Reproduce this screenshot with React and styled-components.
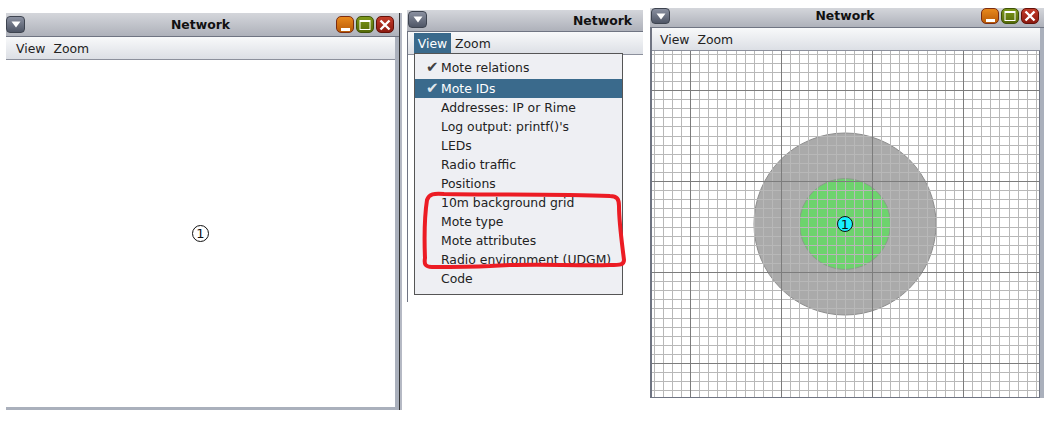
import React from "react";
import styled, { createGlobalStyle } from "styled-components";

const GlobalStyle = createGlobalStyle`
  html, body {
    margin: 0;
    padding: 0;
    background: #fff;
  }
  body {
    font-family: "DejaVu Sans", sans-serif;
    color: #222;
  }
`;

const MENU_ITEMS = [
  { label: "Mote relations", checked: true },
  { label: "Mote IDs", checked: true, active: true },
  { label: "Addresses: IP or Rime" },
  { label: "Log output: printf()'s" },
  { label: "LEDs" },
  { label: "Radio traffic" },
  { label: "Positions" },
  { label: "10m background grid" },
  { label: "Mote type" },
  { label: "Mote attributes" },
  { label: "Radio environment (UDGM)" },
  { label: "Code" },
];

const MenuIcon = () => (
  <svg width="10" height="7" viewBox="0 0 10 7">
    <path d="M0.5 0.5H9.5L5 6.5Z" fill="#fff" />
  </svg>
);

const MinIcon = () => (
  <svg width="11" height="12" viewBox="0 0 11 12">
    <rect x="1" y="9" width="9" height="3" fill="#fff" />
  </svg>
);

const MaxIcon = () => (
  <svg width="12" height="12" viewBox="0 0 12 12">
    <rect x="1" y="1.5" width="10" height="9" fill="none" stroke="#fff" strokeWidth="1" />
    <rect x="1" y="1" width="10" height="2" fill="#fff" />
  </svg>
);

const CloseIcon = () => (
  <svg width="12" height="12" viewBox="0 0 12 12">
    <path d="M1.5 1.5L10.5 10.5M10.5 1.5L1.5 10.5" stroke="#fff" strokeWidth="2.4" />
  </svg>
);

const Window = ({ top, left, width, height, titleHeight, sysLeft, sysTop, titleEnd, buttons, compact, edgeLeft, edgeRight, edgeBottom, children }) => (
  <Frame $top={top} $left={left} $width={width} $height={height} $edgeLeft={edgeLeft} $edgeRight={edgeRight} $edgeBottom={edgeBottom}>
    <TitleBar $height={titleHeight} $edgeLeft={edgeLeft} $edgeRight={edgeRight} $end={titleEnd} $compact={compact}>
      <SystemButton $left={sysLeft} $top={sysTop} $compact={compact}>
        <MenuIcon />
      </SystemButton>
      <Title>Network</Title>
      {buttons && (
        <TitleButtons $top={sysTop}>
          <TitleButton $compact={compact} $from="#e8881c" $to="#b85a08" $edge="#7c2c10">
            <MinIcon />
          </TitleButton>
          <TitleButton $compact={compact} $from="#7c981a" $to="#566a08" $edge="#3f5208">
            <MaxIcon />
          </TitleButton>
          <TitleButton $compact={compact} $from="#c43c2a" $to="#8c1a10" $edge="#641008">
            <CloseIcon />
          </TitleButton>
        </TitleButtons>
      )}
    </TitleBar>
    {children}
  </Frame>
);

const MenuBar = ({ open, pad }) => (
  <Bar $pad={pad}>
    <BarItem $open={open}>View</BarItem>
    <BarItem>Zoom</BarItem>
  </Bar>
);

// the simulator canvas: everything here is drawn, the grid lies over the radio circles
const GridCanvas = () => {
  const w = 387;
  const h = 346;
  const step = 9.1;
  const ox = 38;
  const oy = 39;
  const minorX = [];
  const minorY = [];
  const majorX = [];
  const majorY = [];
  for (let i = -4; ox + i * step < w; i++) {
    const x = Math.round(ox + i * step) + 0.5;
    (((i % 10) + 10) % 10 === 0 ? majorX : minorX).push(x);
  }
  for (let i = -4; oy + i * step < h; i++) {
    const y = Math.round(oy + i * step) + 0.5;
    (((i % 10) + 10) % 10 === 0 ? majorY : minorY).push(y);
  }
  return (
    <svg width={w} height={h} viewBox={`0 0 ${w} ${h}`} style={{ display: "block" }}>
      <circle cx="193" cy="173" r="91" fill="#aaaaaa" stroke="#8c8c8c" />
      <circle cx="193" cy="173" r="45.5" fill="#6dd36d" stroke="#8c9c8c" />
      <g stroke="#b8b8b8">
        {minorX.map((x) => (
          <line key={x} x1={x} x2={x} y1="0" y2={h} />
        ))}
        {minorY.map((y) => (
          <line key={y} x1="0" x2={w} y1={y} y2={y} />
        ))}
      </g>
      <g stroke="#7c7c7c">
        {majorX.map((x) => (
          <line key={x} x1={x} x2={x} y1="0" y2={h} />
        ))}
        {majorY.map((y) => (
          <line key={y} x1="0" x2={w} y1={y} y2={y} />
        ))}
      </g>
      <circle cx="193" cy="173" r="7.5" fill="#19f0ff" stroke="#111" />
      <text x="193" y="178" textAnchor="middle" fontSize="13" fontFamily="DejaVu Sans" fill="#111">
        1
      </text>
    </svg>
  );
};

const App = () => (
  <>
    <GlobalStyle />
    <Desktop>
      <Window top={13} left={6} width={393} height={397} titleHeight={24} sysLeft={0} sysTop={3} edgeLeft={0} edgeRight={4} edgeBottom={3} buttons>
        <MenuBar pad={6} />
        <Blank>
          <MoteBadge>1</MoteBadge>
        </Blank>
      </Window>
      <Divider />
      <Window top={10} left={5} width={236} height={292} titleHeight={22} sysLeft={1} sysTop={1} edgeLeft={1} edgeRight={0} edgeBottom={0} titleEnd>
        <MenuBar open pad={6} />
        <Dropdown>
          {MENU_ITEMS.map((item) => (
            <MenuRow key={item.label} $active={item.active}>
              <Check>{item.checked ? "✔" : ""}</Check>
              {item.label}
            </MenuRow>
          ))}
        </Dropdown>
      </Window>
      <Window top={8} left={7} width={394} height={390} titleHeight={20} sysLeft={1} sysTop={0} edgeLeft={2} edgeRight={4} edgeBottom={0} buttons compact>
        <MenuBar pad={4} />
        <GridCanvas />
      </Window>
    </Desktop>
    <Scribble width="210" height="84" viewBox="0 0 210 84">
      <path
        d="M5 70C4 45 5 25 7 12C9 6 14 5 24 6C70 7 140 6 190 8C197 8 199 11 199 18C199 35 202 55 204 72C204 77 200 77 190 77C150 78 110 75 70 78C50 79 30 79 12 79C5 79 4 76 5 70Z"
        fill="none"
        stroke="#ec1c24"
        strokeWidth="4"
      />
    </Scribble>
  </>
);

const Desktop = styled.div`
  display: flex;
  align-items: flex-start;
  width: 1059px;
  height: 423px;
  overflow: hidden;
`;

const Frame = styled.div`
  position: relative;
  display: flex;
  flex-direction: column;
  flex: none;
  box-sizing: border-box;
  margin-top: ${(p) => p.$top}px;
  margin-left: ${(p) => p.$left}px;
  width: ${(p) => p.$width}px;
  height: ${(p) => p.$height}px;
  background: #fff;
  border-left: ${(p) => p.$edgeLeft}px solid #6f7482;
  border-right: ${(p) => p.$edgeRight}px solid #aab0bc;
  border-bottom: ${(p) => p.$edgeBottom}px solid #aab0bc;
  box-shadow: ${(p) => (p.$edgeRight ? "inset -1px -1px 0 #6f7482" : "none")};
`;

const TitleBar = styled.div`
  position: relative;
  display: flex;
  align-items: center;
  justify-content: ${(p) => (p.$end ? "flex-end" : "center")};
  flex: none;
  box-sizing: border-box;
  height: ${(p) => p.$height}px;
  margin-left: -${(p) => p.$edgeLeft}px;
  margin-right: -${(p) => p.$edgeRight}px;
  padding-right: ${(p) => (p.$end ? "11px" : "4px")};
  padding-bottom: ${(p) => (p.$compact ? "4px" : "0")};
  background: linear-gradient(#d4d6db, #aeb1ba);
  border-bottom: 1px solid #6f7482;
`;

const Title = styled.span`
  font-weight: 700;
  font-size: 12.4px;
  color: #111;
`;

const SystemButton = styled.span`
  position: absolute;
  left: ${(p) => p.$left}px;
  top: ${(p) => p.$top}px;
  display: flex;
  align-items: center;
  justify-content: center;
  box-sizing: border-box;
  width: 19px;
  height: ${(p) => (p.$compact ? "16px" : "17px")};
  border-radius: 4px;
  border: 1px solid #3e4450;
  background: linear-gradient(#8a90a0, #4f5666);
`;

const TitleButtons = styled.div`
  position: absolute;
  right: 5px;
  top: ${(p) => p.$top}px;
  display: flex;
  gap: 2px;
`;

const TitleButton = styled.span`
  display: flex;
  align-items: center;
  justify-content: center;
  box-sizing: border-box;
  width: 18px;
  height: ${(p) => (p.$compact ? "16px" : "17px")};
  border-radius: 5px;
  border: 1px solid ${(p) => p.$edge};
  background: linear-gradient(${(p) => p.$from}, ${(p) => p.$to});
`;

const Bar = styled.div`
  display: flex;
  flex: none;
  align-items: stretch;
  box-sizing: border-box;
  height: 23px;
  padding-left: ${(p) => p.$pad}px;
  background: linear-gradient(#f8f9fa, #dcdfe5);
  border-bottom: 1px solid #8c909c;
`;

const BarItem = styled.span`
  display: flex;
  align-items: center;
  justify-content: center;
  min-width: 37px;
  margin-top: ${(p) => (p.$open ? "1px" : "0")};
  padding: 0 ${(p) => (p.$open ? "0" : "4px")};
  box-sizing: border-box;
  font-size: 12.4px;
  color: ${(p) => (p.$open ? "#fff" : "#222")};
  background: ${(p) => (p.$open ? "#3a6a8c" : "transparent")};
`;

const Blank = styled.div`
  flex: 1;
  display: flex;
  align-items: center;
  justify-content: center;
  background: #fff;
`;

const MoteBadge = styled.span`
  display: flex;
  align-items: center;
  justify-content: center;
  box-sizing: border-box;
  width: 17px;
  height: 17px;
  border: 1px solid #111;
  border-radius: 50%;
  font-size: 13px;
  color: #111;
`;

const Divider = styled.div`
  flex: none;
  box-sizing: border-box;
  width: 3px;
  height: 397px;
  margin-top: 13px;
  border-left: 1px solid #333;
  background: #b5b9c4;
`;

const Dropdown = styled.div`
  flex: none;
  box-sizing: border-box;
  width: 209px;
  height: 242px;
  margin-left: 6px;
  margin-top: -2px;
  padding-top: 4px;
  background: #eeeff3;
  border: 1px solid #555;
  z-index: 1;
`;

const MenuRow = styled.div`
  display: flex;
  align-items: center;
  height: 19px;
  font-size: 12.4px;
  color: ${(p) => (p.$active ? "#fff" : "#222")};
  background: ${(p) => (p.$active ? "#3a6a8c" : "transparent")};
  &:first-child {
    margin-bottom: 2px;
  }
`;

const Check = styled.span`
  flex: none;
  width: 26px;
  padding-left: 11px;
  box-sizing: border-box;
  font-size: 15px;
  line-height: 1;
  opacity: 0.85;
`;

const Scribble = styled.svg`
  position: absolute;
  left: 420px;
  top: 188px;
  z-index: 5;
`;

export default App;
